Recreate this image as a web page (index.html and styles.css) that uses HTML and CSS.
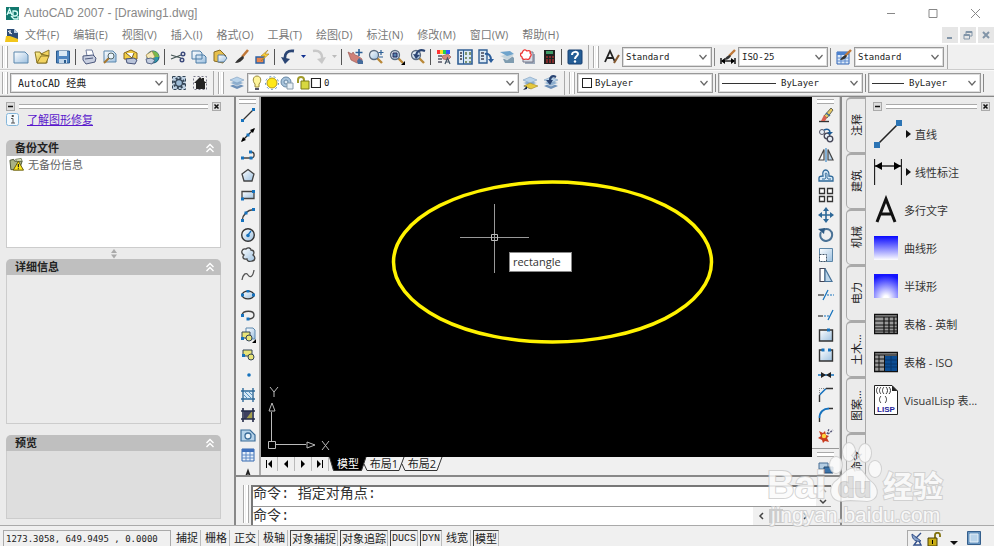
FILE: index.html
```
<!DOCTYPE html>
<html lang="zh-CN">
<head>
  <meta charset="UTF-8"/>
  <meta name="viewport" content="width=device-width, initial-scale=1.0"/>
  <title>AutoCAD 2007 - [Drawing1.dwg]</title>
  <link rel="stylesheet" href="styles.css">
</head>
<body>
  <svg class="defs" aria-hidden="true">
    <defs>
      <linearGradient id="blue" x1="0" y1="0" x2="1" y2="1"><stop offset="0" stop-color="#fff"/><stop offset="1" stop-color="#9cc0e0"/></linearGradient>
      <linearGradient id="gold" x1="0" y1="0" x2="1" y2="1"><stop offset="0" stop-color="#fff8a0"/><stop offset="1" stop-color="#c89a10"/></linearGradient>
      <radialGradient id="dome" cx="0.5" cy="1" r="0.95"><stop offset="0.1" stop-color="#fff"/><stop offset="1" stop-color="#1414ff"/></radialGradient>
      <linearGradient id="ruled" x1="0" y1="0" x2="0" y2="1"><stop offset="0" stop-color="#0808ff"/><stop offset="1" stop-color="#fff"/></linearGradient>
      <symbol id="chev" viewBox="0 0 10 10"><path d="M1.500 3l3.500 4 3.500-4" fill="none" stroke="#666" stroke-width="1.200"/></symbol>
      <symbol id="up2" viewBox="0 0 10 10"><path d="M1.500 5L5 1.500 8.500 5M1.500 9L5 5.500 8.500 9" fill="none" stroke="#fff" stroke-width="1.400"/></symbol>
      <symbol id="layers" viewBox="0 0 16 16"><path d="M1 11l7-3 7 3-7 3z" fill="#6d90b8"/><path d="M1 8l7-3 7 3-7 3z" fill="#8fb0d0" stroke="#eee" stroke-width=".6"/><path d="M1 5l7-3 7 3-7 3z" fill="#b9d3ea" stroke="#7c9dbd" stroke-width=".6"/></symbol>
      <symbol id="lens" viewBox="0 0 16 16"><path d="M9 9l5 5" stroke="#b98838" stroke-width="2.400"/><circle cx="6" cy="6" r="4.500" fill="url(#blue)" stroke="#5c6c80" stroke-width="1.300"/></symbol>
      <symbol id="brush" viewBox="0 0 16 16"><path d="M15 1l-6 7" stroke="#c07838" stroke-width="2.600"/><path d="M10 7C7 8 5 10 2 14c4 0 7-2 9-5z" fill="#333"/></symbol>
    </defs>
  </svg>

  <div class="app">
    <header class="titlebar">
      <svg class="logo" viewBox="0 0 13 13"><path fill="#12786e" d="M0 0h13v13H0z"/><path d="M1 8l2.500-6L6 8M2 6h3M7 4v5h2a2 2 0 000-5zM5 9l3 3h4V9" fill="none" stroke="#d8fff8" stroke-width="1.300"/></svg>
      <h1>AutoCAD 2007 - [Drawing1.dwg]</h1>
      <div class="winbtns">
        <button title="最小化"><svg viewBox="0 0 12 12"><path d="M2 6.500h8"/></svg></button>
        <button title="最大化"><svg viewBox="0 0 12 12"><path d="M2 2.500h8v8H2z"/></svg></button>
        <button title="关闭"><svg viewBox="0 0 12 12"><path d="M2 2l9 9M11 2l-9 9"/></svg></button>
      </div>
    </header>

    <nav class="menubar">
      <svg class="dwg" viewBox="0 0 14 15"><path d="M2 1h7l4 4v7H2z" fill="#2d4d78"/><path d="M9 1l4 4H9z" fill="#b8cce0"/><path d="M3 3l4 3M5 2v4" stroke="#fff"/><path d="M0 14l1-6h4l8 3v3z" fill="#f2c61c"/></svg>
      <a href="#">文件(F)</a>
      <a href="#">编辑(E)</a>
      <a href="#">视图(V)</a>
      <a href="#">插入(I)</a>
      <a href="#">格式(O)</a>
      <a href="#">工具(T)</a>
      <a href="#">绘图(D)</a>
      <a href="#">标注(N)</a>
      <a href="#">修改(M)</a>
      <a href="#">窗口(W)</a>
      <a href="#">帮助(H)</a>
      <div class="docbtns">
        <button title="最小化"><svg viewBox="0 0 10 10"><path d="M2 8h5" stroke-width="2"/></svg></button>
        <button title="还原"><svg viewBox="0 0 10 10"><path d="M3 4V1.500h6V6H7M1 4.500h5.500V9H1zM1 5.500h5M3 2.500h6"/></svg></button>
        <button title="关闭"><svg viewBox="0 0 10 10"><path d="M2 2l6 6M8 2L2 8" stroke-width="2"/></svg></button>
      </div>
    </nav>

    <!-- standard + styles -->
    <div class="bar">
      <i class="grip"></i>
      <button class="tool" title="新建"><svg viewBox="0 0 16 16"><path d="M1 3h11l3 3v8H1z" fill="url(#blue)" stroke="#5b87ad"/></svg></button>
      <button class="tool" title="打开"><svg viewBox="0 0 16 16"><path d="M1 3h5l1 2h6v9H3z" fill="url(#gold)" stroke="#8a7420"/><path d="M3 14l4-7h8l-3 7zM7 5l8-4v6z" fill="#f3d460" stroke="#75621a" stroke-width=".8"/></svg></button>
      <button class="tool" title="保存"><svg viewBox="0 0 16 16"><path d="M1.500 2h13v12h-13z" fill="#4f86c0" stroke="#2a5a8c"/><path d="M4 2h8v5H4z" fill="#dceaf5"/><path d="M4 10h8v4H4z" fill="#c5d8ea"/><path d="M9 11h2v3H9z" fill="#2a5a8c"/></svg></button>
      <i class="sep"></i>
      <button class="tool" title="打印"><svg viewBox="0 0 16 16"><path d="M5 1h6l2 6H6z" fill="#fff" stroke="#7480a0"/><path d="M2 7l10-1 3 3-1 4-9 2-3-4z" fill="#c8cfe0" stroke="#4c587c"/><path d="M4 10l8-1" stroke="#4c587c"/></svg></button>
      <button class="tool" title="打印预览"><svg viewBox="0 0 16 16"><path d="M2 2h9l3 3v8H2z" fill="url(#blue)" stroke="#5b87ad"/><path d="M7 9l-5 5" stroke="#a8772d" stroke-width="2"/><circle cx="9" cy="7" r="3" fill="#e8f3fb" stroke="#566"/></svg></button>
      <button class="tool" title="发布"><svg viewBox="0 0 16 16"><path d="M1 4l7-3 6 3v6H1z" fill="#f3cf45" stroke="#89671a"/><path d="M3 4l6 5 2-5" fill="#fff" stroke="#6e5a30"/><path d="M3 10l8-1 3 2-2 4-8-1z" fill="#b9c4da" stroke="#46537a"/></svg></button>
      <button class="tool" title="三维 DWF"><svg viewBox="0 0 16 16"><circle cx="9" cy="8" r="6" fill="#2c98a8" stroke="#1c5478"/><path d="M9 2a6 6 0 016 6H9z" fill="#79b84e"/><path d="M8 2l3 6-6 4-3-6z" fill="#f6e8b8" stroke="#9c7a32" stroke-width=".6"/><path d="M2 10l5-1 4 2-3 4-5-1z" fill="#c2cde0" stroke="#5a6888"/></svg></button>
      <i class="sep"></i>
      <button class="tool" title="剪切"><svg viewBox="0 0 16 16"><path d="M1 6l10 3M1 10l10-4" stroke="#455" stroke-width="1.200"/><circle cx="13" cy="5" r="1.800" fill="none" stroke="#3c4a7c" stroke-width="1.400"/><circle cx="12" cy="11" r="1.800" fill="none" stroke="#3c4a7c" stroke-width="1.400"/></svg></button>
      <button class="tool" title="复制"><svg viewBox="0 0 16 16"><path d="M1 2h8l2 2v6H1zM5 6h8l2 2v6H5z" fill="url(#blue)" stroke="#4c7da6"/></svg></button>
      <button class="tool" title="粘贴"><svg viewBox="0 0 16 16"><path d="M2 3l6-2 6 6-3 7-9-2z" fill="#e8c04c" stroke="#8a6c25"/><path d="M6 6h6l3 3-3 4H6z" fill="url(#blue)" stroke="#5b7fa0"/></svg></button>
      <button class="tool" title="特性匹配"><svg viewBox="0 0 16 16"><use href="#brush"/></svg></button>
      <button class="tool" title="块编辑器"><svg viewBox="0 0 16 16"><path d="M2 8h8v6H2z" fill="#e8854e" stroke="#2b62a5" stroke-width="1.400"/><path d="M14 1L7 7h4l-4 5 8-7h-4z" fill="#ffd63c" stroke="#a77a14" stroke-width=".6"/></svg></button>
      <i class="sep"></i>
      <button class="tool" title="放弃"><svg viewBox="0 0 16 16"><path d="M14 2C8 1 4 4 5 11" fill="none" stroke="#2a4574" stroke-width="2.800"/><path d="M1 8l4 7 5-5z" fill="#2a4574"/></svg></button>
      <button class="drop" title="放弃列表"><svg viewBox="0 0 10 16"><path d="M3 6h5L5.500 9z" fill="#103090"/></svg></button>
      <button class="tool" title="重做"><svg viewBox="0 0 16 16"><path d="M2 2C8 1 12 4 11 11" fill="none" stroke="#c8c8c8" stroke-width="2.500"/><path d="M15 8l-4 7-5-5z" fill="#c8c8c8"/></svg></button>
      <button class="drop" title="重做列表"><svg viewBox="0 0 10 16"><path d="M3 6h5L5.500 9z" fill="#bbb"/></svg></button>
      <i class="sep"></i>
      <button class="tool" title="实时平移"><svg viewBox="0 0 16 16"><path d="M1 3l4 2 1-2 2 3 3 1 4 3v4h-5L4 11z" fill="#cf8078" stroke="#93504c" stroke-width=".6"/><path d="M10 12l2-3 4 3v3h-5z" fill="#456c9c"/><path d="M12 0v7M8.500 3.500h7" stroke="#2c5f96" stroke-width="1.600"/></svg></button>
      <button class="tool" title="实时缩放"><svg viewBox="0 0 16 16"><use href="#lens"/><path d="M13 1v5M10.500 3.500h5M11 8h4" stroke="#2c5f96" stroke-width="1.200"/></svg></button>
      <button class="tool" title="窗口缩放"><svg viewBox="0 0 16 16"><use href="#lens"/><path d="M4 4h4v4H4z" fill="#5484b0" stroke="#225"/><path d="M16 12v4h-4z"/></svg></button>
      <button class="tool" title="缩放上一个"><svg viewBox="0 0 16 16"><use href="#lens"/><path d="M15 2C10 0 7 2 6 6" fill="none" stroke="#2a4574" stroke-width="2.200"/><path d="M3 5l3 5 4-4z" fill="#2a4574"/></svg></button>
      <i class="sep"></i>
      <button class="tool" title="特性"><svg viewBox="0 0 16 16"><path d="M1 1h3v4H1z" fill="#f33"/><path d="M4 1h3v4H4z" fill="#fd2"/><path d="M7 1h3v4H7z" fill="#2c5"/><path d="M10 1h4v4h-4z" fill="#35f"/><path d="M2 7h4M2 10h4M2 13h4" stroke="#556" stroke-width="1.400"/><path d="M6 7l6-2 3 3-3 3-5-1z" fill="#d88a7c" stroke="#8f504a" stroke-width=".6"/><path d="M9 15l2.500-6L14 15M10 13h3" fill="none" stroke="#456" stroke-width="1.200"/></svg></button>
      <button class="tool" title="设计中心"><svg viewBox="0 0 16 16"><path d="M1 1h14v14H1z" fill="#dbe8f4" stroke="#2f5e94" stroke-width="1.600"/><path d="M3 4h2M3 7h2M3 10h2" stroke="#334" stroke-width="1.400"/><path d="M6.500 1v14" stroke="#2f5e94"/><path d="M8 3h2v3H8zM12 3h2v3h-2zM8 8h2v2H8zM12 8h2v2h-2zM8 12h2v2H8zM12 12h2v2h-2z" fill="#7c9470"/></svg></button>
      <button class="tool" title="工具选项板"><svg viewBox="0 0 16 16"><path d="M1 1h8v13H1z" fill="#dbe8f4" stroke="#2f5e94" stroke-width="1.400"/><path d="M3 4h3M3 7h3M3 10h3" stroke="#445" stroke-width="1.600"/><path d="M7 5c4-1 6 2 6 6" fill="none" stroke="#2a5c9a" stroke-width="2"/><path d="M10 10h6l-3 4z" fill="#2a5c9a"/></svg></button>
      <button class="tool" title="图纸集管理器"><svg viewBox="0 0 16 16"><path d="M4 10l9-3 2 2v5H6z" fill="#7f9cb0"/><path d="M1 7l9-3 5 2-7 5z" fill="#c4d4dc" stroke="#eee" stroke-width=".6"/><path d="M1 3l10-1 4 3-7 2z" fill="#6fa4cc"/></svg></button>
      <button class="tool" title="标记集管理器"><svg viewBox="0 0 16 16"><path d="M5 5h10v10H5z" fill="#9aa7b8"/><path d="M3 3h10v10H3z" fill="#d8dde6" stroke="#778"/><path d="M3 2c1-2 3-1 4 0 2-1 4 0 3 2 2 1 1 3 0 4 0 2-2 3-4 2-2 1-4 0-4-2C0 7 0 4 2 4z" fill="#fff" stroke="#e33" stroke-width="1.300"/></svg></button>
      <button class="tool" title="快速计算器"><svg viewBox="0 0 16 16"><path d="M3 1h11v14H3z" fill="#202020"/><path d="M5 2h7v3H5z" fill="#3f9c69"/><path d="M5 8h8M5 11h8M5 13h8" stroke="#d33" stroke-dasharray="2 1" stroke-width="1.200"/></svg></button>
      <i class="sep"></i>
      <button class="tool" title="帮助"><svg viewBox="0 0 16 16"><rect x="1" y="1" width="14" height="14" rx="1" fill="#245d95" stroke="#173f70"/><path d="M5 6c0-4 6-4 6-1 0 2-3 2-3 5" fill="none" stroke="#fff" stroke-width="2"/><circle cx="8" cy="12.500" r="1.200" fill="#fff"/></svg></button>
      <i class="edge"></i>
      <i class="grip"></i>
      <label class="tool" for="textstyle"><svg viewBox="0 0 16 16"><path d="M1 13L6 2l5 11M3 9h6" fill="none" stroke="#222" stroke-width="1.800"/><path d="M15 6l-5 8" stroke="#865a30" stroke-width="2"/></svg></label>
      <div class="combo w90"><select id="textstyle" aria-label="文字样式"><option>Standard</option></select><svg><use href="#chev"/></svg></div>
      <i class="sep thin"></i>
      <label class="tool" for="dimstyle"><svg viewBox="0 0 16 16"><path d="M1 9v6M15 9v6M2 12h12" stroke="#222" stroke-width="1.600"/><path d="M1 12l4-3v6zM15 12l-4-3v6z"/><path d="M15 1L9 7" stroke="#c07838" stroke-width="2.400"/><path d="M10 6c-3 1-4 2-6 5 3 0 5-1 7-4z" fill="#333"/></svg></label>
      <div class="combo w90"><select id="dimstyle" aria-label="标注样式"><option>ISO-25</option></select><svg><use href="#chev"/></svg></div>
      <i class="sep thin"></i>
      <label class="tool" for="tablestyle"><svg viewBox="0 0 16 16"><path d="M1 3h12v12H1z" fill="#dce9f8" stroke="#2f62b4"/><path d="M1 3h12v3H1z" fill="#4c82d0"/><path d="M1 9h12M1 12h12M5 6v9M9 6v9" stroke="#5e8cd0"/><path d="M15 1L9 7" stroke="#c07838" stroke-width="2.400"/><path d="M10 6c-3 1-4 2-6 5 3 0 5-1 7-4z" fill="#333"/></svg></label>
      <div class="combo w90"><select id="tablestyle" aria-label="表格样式"><option>Standard</option></select><svg><use href="#chev"/></svg></div>
      <i class="edge"></i>
    </div>

    <!-- workspace, layers, properties -->
    <div class="bar">
      <i class="grip"></i>
      <div class="combo w158"><select class="cjk" aria-label="工作空间"><option>AutoCAD 经典</option></select><svg><use href="#chev"/></svg></div>
      <button class="tool" title="工作空间设置"><svg viewBox="0 0 16 16"><path d="M1.500 1.500h13v13h-13z" fill="#bdd0e2" stroke="#345" stroke-dasharray="3 2"/><circle cx="8" cy="8" r="5" fill="none" stroke="#345" stroke-width="2" stroke-dasharray="2 1.900"/><circle cx="8" cy="8" r="3.500" fill="#9dbbd6" stroke="#345" stroke-width="1.400"/></svg></button>
      <button class="tool" title="我的工作空间"><svg viewBox="0 0 16 16"><path d="M1.500 1.500h13v13h-13z" fill="none" stroke="#778" stroke-dasharray="2 2"/><path d="M2 8l6-6 2 2V3h2v3l3 2h-2v6H4V8z" fill="#222"/></svg></button>
      <i class="edge"></i>
      <i class="grip"></i>
      <button class="tool" title="图层特性管理器"><svg viewBox="0 0 16 16"><use href="#layers"/></svg></button>
      <div class="combo w272">
        <svg class="states" viewBox="0 0 70 16">
          <path d="M4 9C1 6 2 1 6 1s5 5 2 8v3H4z" fill="#fff59a" stroke="#98883a"/><path d="M4 13h4v2H4z" fill="#556"/>
          <circle cx="21" cy="8" r="5" fill="#ffe818" stroke="#b49a18"/><circle cx="21" cy="8" r="6.500" fill="none" stroke="#4c86b4" stroke-width=".9" stroke-dasharray="2 2.500"/>
          <circle cx="35" cy="7" r="5" fill="#a8c4dc" stroke="#6687a4"/><circle cx="35" cy="7" r="2" fill="#dbe9f4" stroke="#6687a4"/><path d="M36 8h6v6h-6z" fill="#e8f0f6" stroke="#889cac"/>
          <path d="M47 8V5c0-4 6-4 6 0v3" fill="none" stroke="#a09a28" stroke-width="2"/><path d="M50 6h8v8h-8z" fill="#d8d840" stroke="#7c7c18"/>
          <path d="M60.500 3.500h9v9h-9z" fill="#fff" stroke="#222" stroke-width="1.200"/>
        </svg>
        <select aria-label="图层"><option>0</option></select><svg><use href="#chev"/></svg>
      </div>
      <button class="tool" title="将对象的图层置为当前"><svg viewBox="0 0 16 16"><use href="#layers"/><path d="M2 11l6-3 8 3-7 3z" fill="#e6c83c" stroke="#967d1c" stroke-width=".5"/><path d="M1 15l4-4v3z" fill="#124"/></svg></button>
      <button class="tool" title="上一个图层"><svg viewBox="0 0 16 16"><use href="#layers"/><path d="M13 2C9 0 7 2 7 6" fill="none" stroke="#2a4574" stroke-width="2.200"/><path d="M3 5l4 5 3-5z" fill="#2a4574"/></svg></button>
      <i class="edge"></i>
      <i class="grip"></i>
      <div class="combo w136"><i class="swatch"></i><select aria-label="颜色"><option>ByLayer</option></select><svg><use href="#chev"/></svg></div>
      <i class="sep thin"></i>
      <div class="combo w145"><i class="line long"></i><select aria-label="线型"><option>ByLayer</option></select><svg><use href="#chev"/></svg></div>
      <i class="sep thin"></i>
      <div class="combo w113"><i class="line"></i><select aria-label="线宽"><option>ByLayer</option></select><svg><use href="#chev"/></svg></div>
      <i class="sep thin"></i>
    </div>

    <main class="main">
      <aside class="recovery">
        <div class="palhead"><button class="mini" title="最小化"><svg viewBox="0 0 9 9"><path d="M2 4.500h5"/></svg></button><i class="ribs"></i><button class="mini" title="关闭"><svg viewBox="0 0 9 9"><path d="M2.500 2.500l4 4M6.500 2.500l-4 4"/></svg></button></div>
        <div class="learn"><svg viewBox="0 0 13 13"><rect x=".5" y=".5" width="12" height="12" rx="2" fill="#f3f9fd" stroke="#84b6da"/><path d="M5 5.500h2V10M5 10h4M6 2.500h1.500v1H6z" fill="none" stroke="#555"/></svg><a href="#">了解图形修复</a></div>
        <section class="fold backups">
          <h2>备份文件<svg><use href="#up2"/></svg></h2>
          <div class="pane"><svg viewBox="0 0 16 15"><path d="M1 3l4-1 1 2h8L11 13H2z" fill="#a9b284" stroke="#4b5230"/><path d="M7 2l6-1 1 3H8z" fill="#e8edc8" stroke="#4b5230" stroke-width=".7"/><path d="M10 4l5.500 9.500h-11z" fill="#ffe81c" stroke="#60550c"/><path d="M10 7v3.500M10 11.500v1" stroke="#222" stroke-width="1.300"/></svg><span>无备份信息</span></div>
        </section>
        <svg class="split" viewBox="0 0 8 11"><path d="M1 5l3-4 3 4zM1 6.500l3 4 3-4z" fill="#aaa"/></svg>
        <section class="fold details">
          <h2>详细信息<svg><use href="#up2"/></svg></h2>
          <div class="pane"></div>
        </section>
        <section class="fold preview">
          <h2>预览<svg><use href="#up2"/></svg></h2>
          <div class="pane"></div>
        </section>
      </aside>

      <div class="center">
        <div class="work">
          <div class="vbar">
            <i class="vgrip"></i>
            <button class="tool" title="直线"><svg viewBox="0 0 16 16"><path d="M2.500 13.500l11-11" stroke="#333" stroke-width="1.200"/><path d="M1 12h3v3H1zM12 1h3v3h-3z" fill="#1672bd"/></svg></button>
            <button class="tool" title="构造线"><svg viewBox="0 0 16 16"><path d="M2 14L14 2" stroke="#222" stroke-width="1.300"/><path d="M1 15l2-5 3 3zM15 1l-2 5-3-3z"/><path d="M6.500 6.500h3v3h-3z" fill="#1672bd"/></svg></button>
            <button class="tool" title="多段线"><svg viewBox="0 0 16 16"><path d="M2 11h10c3-1 3-6-1-6" fill="none" stroke="#444" stroke-width="1.300"/><path d="M1 9.500h3v3H1zM9.500 9.500h3v3h-3zM9 3.500h3v3H9z" fill="#1672bd"/></svg></button>
            <button class="tool" title="正多边形"><svg viewBox="0 0 16 16"><path d="M8 2.500L14 7l-2 7H4L2 7z" fill="url(#blue)" stroke="#444" stroke-width="1.300"/></svg></button>
            <button class="tool" title="矩形"><svg viewBox="0 0 16 16"><path d="M2 4.500h12v7H2z" fill="url(#blue)" stroke="#444" stroke-width="1.300"/><path d="M1 10.500h3v3H1zM12 3h3v3h-3z" fill="#1672bd"/></svg></button>
            <button class="tool" title="圆弧"><svg viewBox="0 0 16 16"><path d="M2 14C3 7 7 3 14 2.500" fill="none" stroke="#444" stroke-width="1.300"/><path d="M1 12h3v3H1zM4.500 4.500h3v3h-3zM12 1h3v3h-3z" fill="#1672bd"/></svg></button>
            <button class="tool" title="圆"><svg viewBox="0 0 16 16"><circle cx="8" cy="8" r="6.300" fill="url(#blue)" stroke="#333" stroke-width="1.400"/><path d="M8 8l3-4" stroke="#1672bd" stroke-width="1.300"/><circle cx="8" cy="8.500" r="1.800" fill="#1672bd"/></svg></button>
            <button class="tool" title="修订云线"><svg viewBox="0 0 16 16"><path d="M4 8C0 6 2 1 6 2c2-2 5-1 5 1 4 0 3 4 2 5 3 2 2 6-1 6-3 1-5 0-5-2-4 1-5-2-3-4z" fill="url(#blue)" stroke="#444" stroke-width="1.300"/></svg></button>
            <button class="tool" title="样条曲线"><svg viewBox="0 0 16 16"><path d="M2 13C3 7 6 5 8 8s5 2 6-5" fill="none" stroke="#555" stroke-width="1.300"/></svg></button>
            <button class="tool" title="椭圆"><svg viewBox="0 0 16 16"><ellipse cx="8" cy="8" rx="6" ry="3.800" fill="url(#blue)" stroke="#333" stroke-width="1.300"/><path d="M1 6.500h3v3H1zM12 6.500h3v3h-3zM6.500 3h3v2.500h-3z" fill="#1672bd"/></svg></button>
            <button class="tool" title="椭圆弧"><svg viewBox="0 0 16 16"><path d="M2 8c1-5 12-5 12 0 0 2-2 4-6 4" fill="none" stroke="#444" stroke-width="1.400"/><path d="M1 7h3v3H1zM6.500 10.500h3v3h-3z" fill="#1672bd"/></svg></button>
            <button class="tool" title="插入块"><svg viewBox="0 0 16 16"><path d="M6 1h7l2 2v9H6z" fill="url(#blue)" stroke="#5b87ad"/><path d="M2 5h8v6H2z" fill="#e8e478" stroke="#345"/><circle cx="9" cy="11" r="3" fill="#e8e478" stroke="#345"/><path d="M1 10h3v3H1z" fill="#1672bd"/><path d="M16 12v4h-4z"/></svg></button>
            <button class="tool" title="创建块"><svg viewBox="0 0 16 16"><path d="M3 3h9v6H3z" fill="#e8e478" stroke="#345"/><circle cx="11" cy="10" r="3" fill="#e8e478" stroke="#345"/><path d="M2 7h3v3H2z" fill="#1672bd"/></svg></button>
            <button class="tool" title="点"><svg viewBox="0 0 16 16"><circle cx="9" cy="8" r="1.800" fill="#1672bd"/></svg></button>
            <button class="tool" title="图案填充"><svg viewBox="0 0 16 16"><path d="M4 4h8v8H4z" fill="#d5e8f6"/><path d="M3 1v14M13 1v14M1 4h14M1 12h14" stroke="#2d6898" stroke-width="1.400"/><path d="M4 8l4 4M4 4l8 8M8 4l4 4" stroke="#5791bc"/></svg></button>
            <button class="tool" title="渐变色"><svg viewBox="0 0 16 16"><path d="M4 4h8v8H4z" fill="#3d4060"/><path d="M12 4v8H6z" fill="#a5a04c"/><path d="M3 1v14M13 1v14M1 4h14M1 12h14" stroke="#222a48" stroke-width="1.600"/></svg></button>
            <button class="tool" title="面域"><svg viewBox="0 0 16 16"><path d="M1 3h9l5 5v6H1z" fill="#b5d2e9" stroke="#3a6c98" stroke-width="1.200"/><circle cx="8" cy="9" r="3" fill="#edf5fb" stroke="#3a6c98" stroke-width="1.300"/></svg></button>
            <button class="tool" title="表格"><svg viewBox="0 0 16 16"><path d="M2 2h12v12H2z" fill="#e5effa" stroke="#3468b0"/><path d="M2 2h12v3H2z" fill="#3e70bc"/><path d="M2 8h12M2 11h12M6 5v9M10 5v9" stroke="#5c88c4"/></svg></button>
            <button class="tool" title="多行文字"><svg viewBox="0 0 16 16"><path d="M4 15L8 4l4 11M5.500 11h5" fill="none" stroke="#222" stroke-width="1.800"/></svg></button>
          </div>

          <div class="viewport">
            <div class="canvas">
              <svg viewBox="0 0 551 360">
                <ellipse cx="291.500" cy="165" rx="159" ry="80" fill="none" stroke="#fff200" stroke-width="3.500"/>
                <path d="M199 140.500h69M233.500 107v69" stroke="#999"/>
                <path d="M230.500 137.500h6v6h-6z" fill="none" stroke="#bbb"/>
                <g fill="none" stroke="#bbb">
                  <path d="M7.500 344.500h7v7h-7zM10.500 344v-29M8 314l3-8 3 8zM15 347.500h30M46 345l8 3-8 3z"/>
                  <path d="M9 290l4 5v5M17 290l-4 5M61 344l7 9M68 344l-7 9"/>
                </g>
              </svg>
              <input class="dyn" aria-label="动态输入" value="rectangle">
            </div>
            <div class="tabs">
              <button class="step" title="第一个"><svg viewBox="0 0 10 10"><path d="M2 1h1v8H2zM8 1v8L4 5z"/></svg></button>
              <button class="step" title="上一个"><svg viewBox="0 0 10 10"><path d="M7 1v8L3 5z"/></svg></button>
              <button class="step" title="下一个"><svg viewBox="0 0 10 10"><path d="M3 1v8l4-4z"/></svg></button>
              <button class="step" title="最后一个"><svg viewBox="0 0 10 10"><path d="M2 1v8l4-4zM7 1h1v8H7z"/></svg></button>
              <button class="sheet on"><svg viewBox="0 0 38 14"><path d="M.5 0l4 13.500h28L37 0"/></svg>模型</button>
              <button class="sheet"><svg viewBox="0 0 42 14"><path d="M1 7l3 6.500h32L41 0"/></svg>布局1</button>
              <button class="sheet"><svg viewBox="0 0 42 14"><path d="M1 7l3 6.500h32L41 0"/></svg>布局2</button>
            </div>
          </div>

          <div class="vbar right">
            <i class="vgrip"></i>
            <button class="tool" title="删除"><svg viewBox="0 0 16 16"><path d="M1 14.500h10" stroke="#333" stroke-width="1.400"/><path d="M13 1l2 2-6 8-3-2z" fill="#e8c860" stroke="#665"/><path d="M6 8l3 3-2 3H3z" fill="#d86050"/><path d="M8 6l4 3" stroke="#3a6c98" stroke-width="1.500"/></svg></button>
            <button class="tool" title="复制对象"><svg viewBox="0 0 16 16"><circle cx="4" cy="5" r="2.500" fill="#e5eef6" stroke="#556"/><circle cx="9" cy="9" r="2.800" fill="#e5eef6" stroke="#445" stroke-width="1.300"/><circle cx="12" cy="12" r="2.800" fill="#e5eef6" stroke="#445" stroke-width="1.300"/><path d="M6 3c4-2 6 0 6 3" fill="none" stroke="#1d5c96" stroke-width="1.600"/><path d="M9 5h6l-3 3z" fill="#1d5c96"/></svg></button>
            <button class="tool" title="镜像"><svg viewBox="0 0 16 16"><path d="M6 2.500V13H1z" fill="#fff" stroke="#444" stroke-width="1.200"/><path d="M10 2.500V13h5z" fill="#bcd5ea" stroke="#444" stroke-width="1.200"/><path d="M8 1v14" stroke="#1672bd"/></svg></button>
            <button class="tool" title="偏移"><svg viewBox="0 0 16 16"><path d="M1 14v-3c0-2 2-2 4-2-2-8 7-8 6 0 2 0 4 0 4 2v3z" fill="#d9ebf8" stroke="#2d6898" stroke-width="1.300"/><path d="M4 12h3c2-1-1-6 1-6s0 5 2 6h3" fill="none" stroke="#2d6898"/></svg></button>
            <button class="tool" title="阵列"><svg viewBox="0 0 16 16"><path d="M1.500 1.500h5v5h-5zM9.500 1.500h5v5h-5zM1.500 9.500h5v5h-5zM9.500 9.500h5v5h-5z" fill="#fff" stroke="#333" stroke-width="1.300"/></svg></button>
            <button class="tool" title="移动"><svg viewBox="0 0 16 16"><path d="M8 3v10M3 8h10" stroke="#2d6898" stroke-width="1.600"/><path d="M8 0l3 4H5zM8 16l3-4H5zM0 8l4-3v6zM16 8l-4-3v6z" fill="#2d6898"/></svg></button>
            <button class="tool" title="旋转"><svg viewBox="0 0 16 16"><path d="M5 3c5-3 10 1 9 6s-8 7-11 2c-1-2-1-4 0-6" fill="none" stroke="#4a7296" stroke-width="2"/><path d="M0 2l7-1-1 6z" fill="#2d5a84"/></svg></button>
            <button class="tool" title="缩放"><svg viewBox="0 0 16 16"><path d="M1.500 1.500h13v13h-13z" fill="url(#blue)" stroke="#5c86a8"/><path d="M1.500 7.500h7v7h-7z" fill="#fff" stroke="#456" stroke-dasharray="2 1"/></svg></button>
            <button class="tool" title="拉伸"><svg viewBox="0 0 16 16"><path d="M2 1.500h5v13H2z" fill="#fff" stroke="#445" stroke-width="1.200"/><path d="M7 1.500l7 13H7z" fill="#bcd5ea" stroke="#48749a" stroke-width="1.200"/></svg></button>
            <button class="tool" title="修剪"><svg viewBox="0 0 16 16"><path d="M0 8h6" stroke="#333" stroke-width="1.200"/><path d="M5 13l5-10" stroke="#1672bd" stroke-width="1.300"/><path d="M9 8h7" stroke="#1672bd" stroke-dasharray="2 1"/></svg></button>
            <button class="tool" title="延伸"><svg viewBox="0 0 16 16"><path d="M0 9h5" stroke="#333" stroke-width="1.200"/><path d="M6 9h6" stroke="#1672bd" stroke-dasharray="2 1"/><path d="M10 13l5-10" stroke="#1672bd" stroke-width="1.300"/></svg></button>
            <button class="tool" title="打断于点"><svg viewBox="0 0 16 16"><path d="M1.500 3h13v11h-13z" fill="url(#blue)" stroke="#333" stroke-width="1.400"/><path d="M9 1.500h3v3H9z" fill="#1672bd"/></svg></button>
            <button class="tool" title="打断"><svg viewBox="0 0 16 16"><path d="M5 3H1.500v11h13V3H11" fill="url(#blue)" stroke="#333" stroke-width="1.400"/><path d="M3.500 1.500h3v3h-3zM10 1.500h3v3h-3z" fill="#1672bd"/></svg></button>
            <button class="tool" title="合并"><svg viewBox="0 0 16 16"><path d="M0 8h16" stroke="#1672bd" stroke-width="1.500"/><path d="M3 5l5 3-5 3zM13 5L8 8l5 3z" fill="#222"/></svg></button>
            <button class="tool" title="倒角"><svg viewBox="0 0 16 16"><path d="M1.500 15V8M8 1.500h7" stroke="#333" stroke-width="1.400"/><path d="M1.500 8L8 1.500" stroke="#1672bd" stroke-width="1.600"/><path d="M1.500 8V1.500H8" fill="none" stroke="#888" stroke-dasharray="1 1"/></svg></button>
            <button class="tool" title="圆角"><svg viewBox="0 0 16 16"><path d="M1.500 15v-4M11 1.500h4" stroke="#333" stroke-width="1.400"/><path d="M1.500 11c0-6 4-9.500 9.500-9.500" fill="none" stroke="#1672bd" stroke-width="1.800"/></svg></button>
            <button class="tool" title="分解"><svg viewBox="0 0 16 16"><path d="M9 7l2-5M10 7l5-4" stroke="#557" stroke-dasharray="2 1" stroke-width="1.300"/><path d="M1 4l4 2 2-2 1 4 3 1-2 2 2 4-4-1-2 2-1-3-4-2 3-2z" fill="#c83c20"/><circle cx="6" cy="9" r="2.200" fill="#ffd33c"/></svg></button>
            <i class="vend"></i>
            <i class="vgrip"></i>
            <button class="tool" title="绘图次序"><svg viewBox="0 0 16 16"><path d="M1 3h9v6H1z" fill="#b4cde2" stroke="#486f94"/><path d="M6 7h9v6H6z" fill="#3a72a8" stroke="#244a70"/></svg></button>
          </div>
        </div>

        <div class="cmd">
          <i class="grip"></i>
          <div class="console">
            <div class="history"><span>命令: 指定对角点:</span><div class="vscroll"><svg viewBox="0 0 10 18"><path d="M2 5l3-3 3 3" stroke="#aaa"/><path d="M2 13l3 3 3-3" stroke="#444"/></svg></div></div>
            <div class="prompt"><label for="cmdline">命令:</label><input id="cmdline"><div class="hscroll"><svg viewBox="0 0 8 10"><path d="M6 2L3 5l3 3"/></svg><i></i><svg viewBox="0 0 8 10"><path d="M3 2l3 3-3 3"/></svg></div></div>
          </div>
        </div>
      </div>

      <aside class="palette">
        <div class="vtabs">
          <button>注释</button>
          <button>建筑</button>
          <button>机械</button>
          <button>电力</button>
          <button>土木...</button>
          <button>图案...</button>
          <button>命令</button>
        </div>
        <div class="palbody">
          <div class="palhead"><button class="mini" title="最小化"><svg viewBox="0 0 9 9"><path d="M2 4.500h5"/></svg></button><i class="ribs"></i><button class="mini" title="关闭"><svg viewBox="0 0 9 9"><path d="M2.500 2.500l4 4M6.500 2.500l-4 4"/></svg></button></div>
          <ul>
            <li><svg viewBox="0 0 28 28"><path d="M3 25L25 3" stroke="#222" stroke-width="1.600"/><path d="M0 22h6v6H0zM22 0h6v6h-6z" fill="#2c74b4"/></svg><i class="fly"></i>直线</li>
            <li><svg viewBox="0 0 28 28"><path d="M.5 1v26M27.500 1v26M1 8h26" stroke="#222" stroke-width="1.300"/><path d="M1 8l7-4v8zM27 8l-7-4v8z"/></svg><i class="fly"></i>线性标注</li>
            <li><svg viewBox="0 0 24 28"><path d="M3 26L12 3l9 23M6 18h12" fill="none" stroke="#111" stroke-width="3"/></svg>多行文字</li>
            <li><svg viewBox="0 0 24 24"><path d="M0 0h24v24H0z" fill="url(#ruled)"/></svg>曲线形</li>
            <li><svg viewBox="0 0 24 24"><path d="M0 0h24v24H0z" fill="url(#dome)"/></svg>半球形</li>
            <li><svg viewBox="0 0 24 20"><path d="M.5.500h23v19H.5z" fill="#999" stroke="#111" stroke-width="1.400"/><path d="M0 3h24M0 7h24M0 11h24M0 14h24M0 17h24M10 3v17M15 3v17M20 3v17" stroke="#111" stroke-width="1.200"/></svg>表格 - 英制</li>
            <li><svg viewBox="0 0 24 20"><path d="M.5.500h23v19H.5z" fill="#999" stroke="#111" stroke-width="1.400"/><path d="M11 4h12v15H11z" fill="#0b4c92"/><path d="M0 3h24M0 7h11M0 11h11M0 15h11M5 3v17M10.500 3v17" stroke="#111"/><path d="M11 8h12M11 12h12M11 15h12M17 4v15" stroke="#07356a"/></svg>表格 - ISO</li>
            <li><svg viewBox="0 0 24 30"><path d="M.5.500H18l5.500 5.500v23.500H.5z" fill="#fff" stroke="#222"/><path d="M18 .5V6h5.500z" fill="#222"/><path d="M4 2c-2 2-2 5 0 7M7 2C5 4 5 7 7 9M10 2c-2 2-2 5 0 7M12 2c2 2 2 5 0 7M15 2c2 2 2 5 0 7M7 11c-2 2-2 5 0 7M11 11c2 2 2 5 0 7" fill="none" stroke="#333"/><text x="12" y="27" class="lisp">LISP</text></svg>VisualLisp 表...</li>
          </ul>
        </div>
      </aside>
    </main>

    <footer class="status">
      <output class="coords">1273.3058, 649.9495 , 0.0000</output>
      <button>捕捉</button>
      <button>栅格</button>
      <button>正交</button>
      <button>极轴</button>
      <button class="down">对象捕捉</button>
      <button class="down">对象追踪</button>
      <button class="down mono">DUCS</button>
      <button class="down mono">DYN</button>
      <button>线宽</button>
      <button class="down">模型</button>
      <div class="tray">
        <svg viewBox="0 0 14 14"><path d="M2 2c0 6 4 8 9 7z" fill="#8aa4cc" stroke="#33508a"/><path d="M6 6l5-5M7 9l-3 4h7L9 9" fill="none" stroke="#33508a" stroke-width="1.400"/></svg>
        <svg viewBox="0 0 14 14"><path d="M8 6V3c0-3 5-3 5 0v2" fill="none" stroke="#80700c" stroke-width="1.800"/><path d="M1 6h9v8H1z" fill="#c8ac14" stroke="#4c4208"/><path d="M5 8h1v4H5z"/></svg>
      </div>
      <i class="more"></i>
      <button class="clean" title="全屏显示"><svg viewBox="0 0 14 14"><path d="M.5.500h13v13H.5z" fill="#6895c0" stroke="#345f8c"/><path d="M3 3h8v8H3z" fill="#b8d3ea" stroke="#e5f0f8"/></svg></button>
      <i class="size"></i>
    </footer>

    <svg class="mark" viewBox="0 0 190 90">
      <g><ellipse cx="74" cy="25" rx="6" ry="8"/><ellipse cx="87" cy="12" rx="6" ry="9"/><ellipse cx="103" cy="13" rx="6" ry="9"/><ellipse cx="113" cy="29" rx="6" ry="8"/><path d="M93 28c8 0 10 9 15 13 10 7 9 19-3 20-7 0-17-2-25 0-11 0-14-12-7-19 7-5 11-14 20-14z"/></g>
      <text x="5" y="58" class="big">Bai</text>
      <text x="76" y="57" class="du">du</text>
      <text x="121" y="57" class="cn">经验</text>
      <text x="9" y="82" class="url">jingyan.baidu.com</text>
    </svg>
  </div>
</body>
</html>
```
FILE: styles.css
```
* {
  box-sizing: border-box;
}

body {
  margin: 0;
  background: #fff;
  color: #222;
  font-family: "Open Sans", "Noto Sans CJK SC", sans-serif;
  font-size: 11px;
}

button {
  font: inherit;
  color: inherit;
  padding: 0;
  border: 0;
  background: none;
}

svg {
  display: block;
  flex: none;
}

.defs {
  position: absolute;
  width: 0;
  height: 0;
}

.app {
  position: relative;
  display: flex;
  flex-direction: column;
  height: 100vh;
  min-height: 550px;
  padding: 0 6px 4px 0;
  overflow: hidden;
}

/* title and menu */
.titlebar {
  display: flex;
  align-items: center;
  height: 26px;
  padding-left: 6px;
}

.logo {
  width: 13px;
  height: 13px;
}

h1 {
  margin: 0 0 0 5px;
  font-family: "Liberation Sans", sans-serif;
  font-size: 12px;
  font-weight: normal;
  color: #888;
}

.winbtns {
  display: flex;
  margin-left: auto;
}

.winbtns button {
  width: 42px;
  padding-left: 17px;
}

.winbtns svg {
  width: 12px;
  height: 12px;
  fill: none;
  stroke: #888;
}

.menubar {
  display: flex;
  align-items: center;
  height: 18px;
  padding-left: 5px;
  gap: 14px;
}

.dwg {
  width: 14px;
  height: 15px;
  margin-right: -8px;
}

.menubar a {
  color: #777;
  text-decoration: none;
  line-height: 18px;
}

.docbtns {
  display: flex;
  gap: 2px;
  margin-left: auto;
}

.docbtns button {
  display: flex;
  align-items: center;
  justify-content: center;
  width: 16px;
  height: 16px;
  background: #e6e6e6;
}

.docbtns svg {
  width: 10px;
  height: 10px;
  fill: none;
  stroke: #8295a8;
}

/* toolbars */
.bar {
  display: flex;
  align-items: center;
  height: 26px;
  padding-left: 2px;
  background: #f0f0f0;
  border-top: 1px solid #fafafa;
  border-bottom: 1px solid #ccc;
}

.bar > * {
  flex: none;
}

.grip {
  width: 6px;
  height: 22px;
  margin-right: 2px;
  border: solid #aaa;
  border-width: 0 1px;
  box-shadow: inset 1px 0 #fff, inset -2px 0 #fff;
}

.tool {
  display: flex;
  align-items: center;
  justify-content: center;
  width: 21px;
  height: 20px;
}

.tool svg {
  width: 16px;
  height: 16px;
}

.drop,
.drop svg {
  width: 10px;
  height: 16px;
}

.sep {
  width: 5px;
  height: 16px;
  border-left: 1px solid #555;
  border-right: 4px solid #f0f0f0;
  margin-left: 2px;
  margin-right: -2px;
}

.sep.thin {
  border-left-color: #888;
  height: 18px;
}

.edge {
  width: 4px;
  height: 24px;
  border-right: 1px solid #aaa;
  margin-right: 4px;
}

.combo {
  display: flex;
  align-items: center;
  height: 20px;
  padding: 0 3px;
  background: #fff;
  border: 1px solid #999;
  box-shadow: inset 0 0 0 1px #ddd;
}

.combo > svg:last-child {
  width: 10px;
  height: 10px;
  pointer-events: none;
}

.combo select {
  flex: 1;
  min-width: 0;
  padding: 0;
  border: 0;
  background: none;
  color: #222;
  appearance: none;
  font-family: "DejaVu Sans Mono", "Noto Sans CJK SC", monospace;
  font-size: 9px;
}

.combo .cjk {
  font-size: 10px;
  padding-left: 4px;
}

.w90 {
  width: 90px;
}

.w113 {
  width: 113px;
}

.w136 {
  width: 136px;
}

.w145 {
  width: 145px;
}

.w158 {
  width: 158px;
}

.w272 {
  width: 272px;
}

.states {
  width: 70px;
  height: 16px;
  margin-right: 3px;
}

.swatch {
  width: 10px;
  height: 10px;
  border: 1px solid #222;
  margin: 0 3px 0 1px;
}

.line {
  width: 32px;
  border-top: 1px solid #333;
  margin-right: 5px;
}

.line.long {
  width: 54px;
}

/* main area */
.main {
  flex: 1;
  display: flex;
  min-height: 0;
  background: #ebebeb;
  border-top: 1px solid #888;
  border-bottom: 1px solid #aaa;
}

.recovery {
  display: flex;
  flex-direction: column;
  width: 236px;
  padding: 4px 13px 6px 6px;
  border-right: 2px solid #888;
}

.palhead {
  display: flex;
  align-items: center;
  gap: 4px;
  height: 10px;
}

.mini {
  width: 9px;
  height: 9px;
  background: #ddd;
  outline: 1px solid #aaa;
  outline-offset: -1px;
}

.mini svg {
  width: 9px;
  height: 9px;
  stroke: #111;
  stroke-width: 1.5;
}

.ribs {
  flex: 1;
  height: 5px;
  background: #fff;
  border: solid #aaa;
  border-width: 1px 0;
}

.learn {
  display: flex;
  align-items: center;
  gap: 8px;
  height: 16px;
  margin-bottom: 13px;
}

.learn svg {
  width: 13px;
  height: 13px;
}

.learn a {
  color: #5a18cc;
}

.fold {
  display: flex;
  flex-direction: column;
}

.fold h2 {
  display: flex;
  align-items: center;
  height: 16px;
  margin: 0;
  padding: 0 6px 0 9px;
  background: #bfbfbf;
  border-radius: 5px 5px 0 0;
  font-size: 11px;
  line-height: 16px;
}

.fold h2 svg {
  width: 10px;
  height: 10px;
  margin-left: auto;
}

.pane {
  flex: 1;
  display: flex;
  align-items: flex-start;
  gap: 4px;
  padding: 1px 2px;
  border: 1px solid #ccc;
  border-top: 0;
  color: #666;
  line-height: 16px;
}

.pane svg {
  width: 15px;
  height: 15px;
}

.backups {
  flex: 107 0 0;
}

.backups .pane {
  background: #fff;
}

.split {
  width: 8px;
  height: 11px;
  margin: 0 auto;
}

.details {
  flex: 164 0 0;
  margin-bottom: 11px;
}

.preview {
  flex: 84 0 0;
}

.preview .pane {
  background: #dedede;
}

.center {
  flex: 1;
  display: flex;
  flex-direction: column;
  min-width: 0;
  border-right: 2px solid #888;
}

.work {
  flex: 1;
  display: flex;
  min-height: 0;
  background: #f0f0f0;
  border-bottom: 2px solid #888;
}

.vbar {
  display: flex;
  flex-direction: column;
  align-items: center;
  width: 25px;
  padding-top: 2px;
  border-right: 2px solid #aaa;
  overflow: hidden;
}

.vbar .tool {
  flex: none;
}

.vbar.right {
  width: 28px;
  border-right: 1px solid #ccc;
}

.vgrip {
  flex: none;
  width: 17px;
  height: 5px;
  margin-bottom: 1px;
  border: solid #aaa;
  border-width: 1px 0;
  background: #fff;
}

.vend {
  flex: none;
  width: 100%;
  margin: 3px 0;
  border-top: 1px solid #999;
}

.viewport {
  flex: 1;
  display: flex;
  flex-direction: column;
  min-width: 0;
}

.canvas {
  position: relative;
  flex: 1;
  min-height: 0;
  background: #000;
}

.canvas svg {
  width: 100%;
  height: 100%;
}

.dyn {
  position: absolute;
  left: 45%;
  top: 43%;
  width: 63px;
  height: 20px;
  padding: 0 3px;
  border: 1px solid #888;
  font: 11px "Open Sans", sans-serif;
  color: #333;
}

.tabs {
  display: flex;
  height: 18px;
  padding-bottom: 4px;
}

.step {
  display: flex;
  align-items: center;
  justify-content: center;
  width: 17px;
  border-right: 1px solid #bbb;
}

.step svg {
  width: 10px;
  height: 10px;
}

.sheet {
  position: relative;
  z-index: 0;
  width: 42px;
  height: 14px;
  margin-right: -4px;
  line-height: 12px;
}

.sheet svg {
  position: absolute;
  z-index: -1;
  inset: 0;
  width: 100%;
  height: 100%;
  fill: #f4f4f4;
  stroke: #333;
}

.sheet.on {
  width: 38px;
  color: #fff;
}

.sheet.on svg {
  fill: #000;
}

.cmd {
  display: flex;
  height: 48px;
  padding: 8px 9px 0 7px;
  background: #f0f0f0;
}

.cmd .grip {
  height: 38px;
}

.console {
  flex: 1;
  display: flex;
  flex-direction: column;
  border: solid #777;
  border-width: 2px 0 0 2px;
  background: #fff;
  color: #333;
  font: 14px "Liberation Mono", "Noto Sans CJK SC", monospace;
}

.history,
.prompt {
  display: flex;
  height: 20px;
  line-height: 14px;
}

.history {
  border-bottom: 1px solid #999;
}

.prompt {
  align-items: center;
  height: 18px;
}

.prompt input {
  flex: 1;
  min-width: 0;
  border: 0;
  outline: 0;
  font: inherit;
}

.vscroll {
  margin-left: auto;
  width: 15px;
  padding-left: 2px;
  background: #f0f0f0;
}

.vscroll svg {
  width: 10px;
  height: 18px;
  fill: none;
  stroke-width: 1.5;
}

.hscroll {
  display: flex;
  align-items: center;
  width: 78px;
  height: 18px;
  padding: 0 22px 0 4px;
  background: #f0f0f0;
}

.hscroll svg {
  width: 8px;
  height: 10px;
  fill: none;
  stroke: #444;
  stroke-width: 1.5;
}

.hscroll i {
  width: 14px;
  height: 14px;
  margin: 0 auto 0 4px;
  background: #ccc;
}

/* tool palettes */
.palette {
  display: flex;
  width: 152px;
}

.vtabs {
  width: 25px;
  padding: 0 1px 0 4px;
  overflow: hidden;
}

.vtabs button {
  display: block;
  width: 20px;
  height: 56px;
  border: 1px solid #aaa;
  border-bottom-width: 2px;
  border-radius: 0 5px 5px 0;
  writing-mode: vertical-rl;
  text-orientation: sideways;
  text-align: center;
  transform: rotate(180deg);
}

.palbody {
  flex: 1;
  padding: 4px 4px 0 6px;
}

.palette ul {
  list-style: none;
  margin: 4px 0 0;
  padding: 0;
}

.palette li {
  display: flex;
  align-items: center;
  gap: 6px;
  height: 38px;
  padding-left: 1px;
  color: #333;
  white-space: nowrap;
}

.palette li svg {
  width: 24px;
  height: 30px;
}

.palette li:nth-child(-n+2) svg {
  width: 28px;
  height: 28px;
}

.palette li:nth-child(-n+2) {
  gap: 4px;
}

.fly {
  border: solid transparent;
  border-width: 4px 0 4px 5px;
  border-left-color: #111;
}

.lisp {
  font: bold 8px "Liberation Sans", sans-serif;
  fill: #24249a;
  text-anchor: middle;
}

/* status bar */
.status {
  display: flex;
  align-items: flex-end;
  height: 20px;
  padding: 0 2px 0 3px;
  gap: 2px;
  background: #f0f0f0;
  overflow: hidden;
}

.coords {
  width: 168px;
  height: 16px;
  padding-left: 2px;
  border: 1px solid #aaa;
  border-bottom: 0;
  font: 9px/16px "DejaVu Sans Mono", monospace;
}

.status button {
  height: 16px;
  padding: 0 2px;
  line-height: 16px;
  border-right: 1px solid #bbb;
}

.coords + button {
  margin-left: 1px;
}

.status .down {
  padding: 0 1px;
  border-left: 1px solid #444;
  border-top: 1px solid #444;
}

.status .mono {
  font: 10px/16px "Liberation Mono", monospace;
}

.tray {
  display: flex;
  gap: 3px;
  margin-left: auto;
  padding: 1px 2px 0;
  border: solid #aaa;
  border-width: 1px 0 0 1px;
}

.tray svg {
  width: 14px;
  height: 14px;
}

.more {
  margin: 0 7px 1px 5px;
  border: solid transparent;
  border-width: 4px 4px 0;
  border-top-color: #111;
}

.status .clean {
  border: 0;
  padding: 0;
}

.clean svg {
  width: 14px;
  height: 14px;
}

.size {
  width: 9px;
}

/* site mark over the corner */
.mark {
  position: absolute;
  right: 48px;
  bottom: 20px;
  width: 190px;
  height: 90px;
  pointer-events: none;
  opacity: 0.85;
  fill: #fbfbfb;
  stroke: #ccc;
  stroke-width: 2;
  paint-order: stroke;
  font-family: "Liberation Sans", "Noto Sans CJK SC", sans-serif;
}

.big {
  font-size: 38px;
  font-weight: bold;
}

.du {
  font-size: 27px;
  font-weight: bold;
  fill: #ddd;
}

.cn {
  font-size: 30px;
  font-weight: bold;
}

.url {
  font-size: 21px;
}
```
